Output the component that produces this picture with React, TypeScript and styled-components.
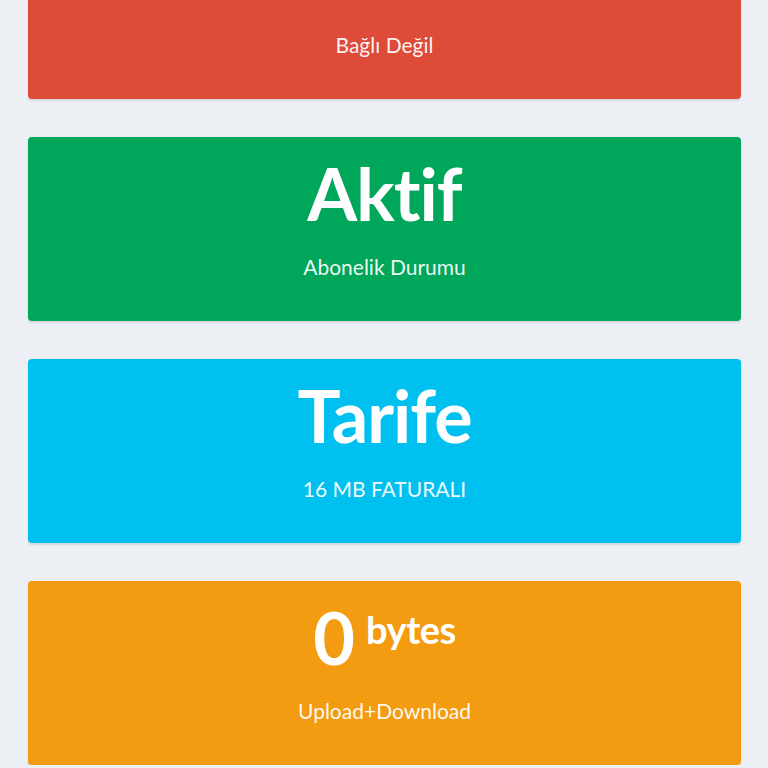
import React from "react";
import styled, { createGlobalStyle } from "styled-components";

const Global = createGlobalStyle`
  html, body { margin: 0; padding: 0; background: #ecf0f5; }
  body { font-family: Lato, "Noto Sans", sans-serif; overflow: hidden; }
`;

const Page = styled.div`
  display: flex;
  flex-direction: column;
  gap: 38px;
  padding: 0 27px 0 28px;
  margin-top: -85px;
`;

const Box = styled.div<{ $bg: string }>`
  height: 184px;
  background: ${(p) => p.$bg};
  border-radius: 4px;
  box-shadow: 0 2px 2px rgba(0, 0, 0, 0.1);
  display: flex;
  flex-direction: column;
  align-items: center;
  padding-top: 20px;
  box-sizing: border-box;
  color: #fff;
  text-align: center;
`;

const Title = styled.h3`
  margin: 0;
  min-height: 72px;
  font-size: 72px;
  line-height: 72px;
  font-weight: 700;
  letter-spacing: -1px;
  white-space: nowrap;
`;

const Sup = styled.sup`
  font-size: 38px;
  font-weight: 700;
  vertical-align: top;
  line-height: 38px;
  margin-left: 12px;
  letter-spacing: -0.5px;
  position: relative;
  top: 9px;
`;

const Sub = styled.p`
  margin: 25px 0 0;
  font-size: 21px;
  line-height: 26px;
  color: rgba(255, 255, 255, 0.95);
`;

type BoxData = { bg: string; title?: string; sup?: string; sub: string };

const boxes: BoxData[] = [
  { bg: "#dd4b39", sub: "Bağlı Değil" },
  { bg: "#00a65a", title: "Aktif", sub: "Abonelik Durumu" },
  { bg: "#00c0ef", title: "Tarife", sub: "16 MB FATURALI" },
  { bg: "#f39c12", title: "0", sup: "bytes", sub: "Upload+Download" },
];

export default function App() {
  return (
    <>
      <Global />
      <Page>
        {boxes.map((b) => (
          <Box key={b.sub} $bg={b.bg}>
            <Title>
              {b.title}
              {b.sup && <Sup>{b.sup}</Sup>}
            </Title>
            <Sub>{b.sub}</Sub>
          </Box>
        ))}
      </Page>
    </>
  );
}
